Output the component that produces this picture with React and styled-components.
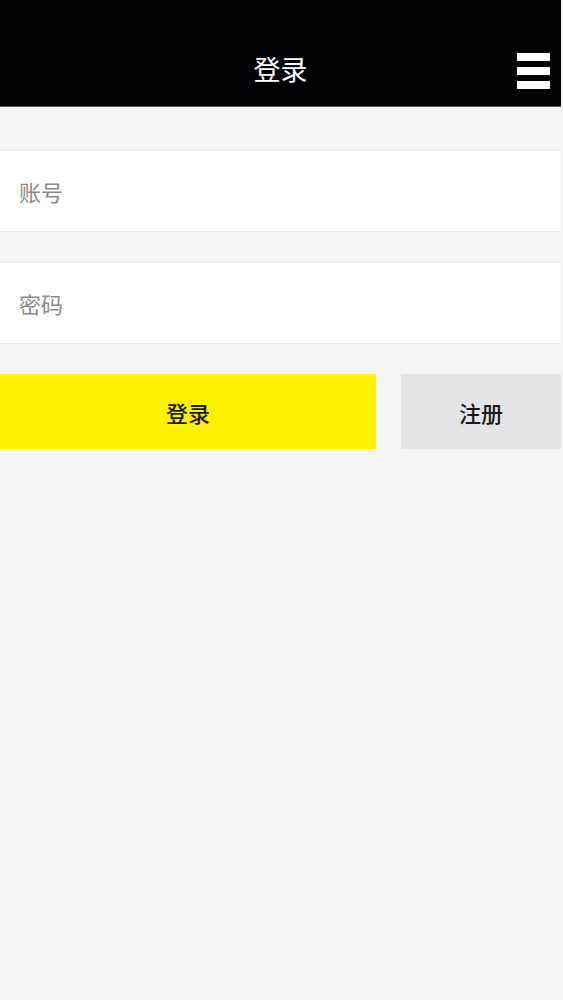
import React from 'react'
import styled, { createGlobalStyle } from 'styled-components'

const GlobalStyle = createGlobalStyle`
  html, body {
    margin: 0;
    padding: 0;
    background: #f4f3f5;
    font-family: "Noto Sans CJK SC", "Noto Sans", sans-serif;
  }
`

const Page = styled.div`
  width: 561px;
  min-height: 1000px;
  background: #f4f3f5;
`

const Header = styled.header`
  height: 107px;
  box-sizing: border-box;
  padding-top: 36px;
  background: #020104;
  border-bottom: 1px solid #5a5a5c;
  display: flex;
  align-items: stretch;
  position: relative;
`

const Title = styled.h1`
  flex: 1;
  margin: 0;
  display: flex;
  align-items: center;
  justify-content: center;
  color: #ffffff;
  font-size: 27px;
  font-weight: 400;
  padding-bottom: 6px;
`

const MenuButton = styled.button`
  position: absolute;
  right: 11px;
  top: 53px;
  width: 33px;
  height: 36px;
  padding: 0;
  border: none;
  background: transparent;
  display: flex;
  flex-direction: column;
  justify-content: space-between;
`

const MenuBar = styled.span`
  display: block;
  height: 8px;
  background: #ffffff;
`

const Form = styled.form`
  padding-top: 43px;
  display: flex;
  flex-direction: column;
`

const Field = styled.input`
  display: block;
  width: 100%;
  box-sizing: border-box;
  height: ${p => p.h}px;
  margin-bottom: ${p => p.gap}px;
  border: none;
  border-top: 1px solid #ebeaec;
  border-bottom: 1px solid #ebeaec;
  background: #ffffff;
  padding: 0 19px;
  font-family: inherit;
  font-size: 22px;
  color: #333;
  outline: none;
  &::placeholder {
    color: #8a898b;
  }
`

const Actions = styled.div`
  display: flex;
  gap: 25px;
  height: 75px;
`

const Button = styled.button`
  width: ${p => p.w}px;
  border: none;
  padding: 0;
  background: ${p => p.bg};
  color: #1a1a1a;
  font-family: inherit;
  font-size: 22px;
  font-weight: 500;
  display: flex;
  align-items: center;
  justify-content: center;
`

export default function App() {
  return (
    <Page>
      <GlobalStyle />
      <Header>
        <Title>登录</Title>
        <MenuButton type="button" aria-label="菜单">
          <MenuBar />
          <MenuBar />
          <MenuBar />
        </MenuButton>
      </Header>
      <Form onSubmit={e => e.preventDefault()}>
        <Field h={82} gap={30} placeholder="账号" />
        <Field h={82} gap={30} type="password" placeholder="密码" />
        <Actions>
          <Button type="submit" w={376} bg="#fff200">登录</Button>
          <Button type="button" w={160} bg="#e4e3e5">注册</Button>
        </Actions>
      </Form>
    </Page>
  )
}
